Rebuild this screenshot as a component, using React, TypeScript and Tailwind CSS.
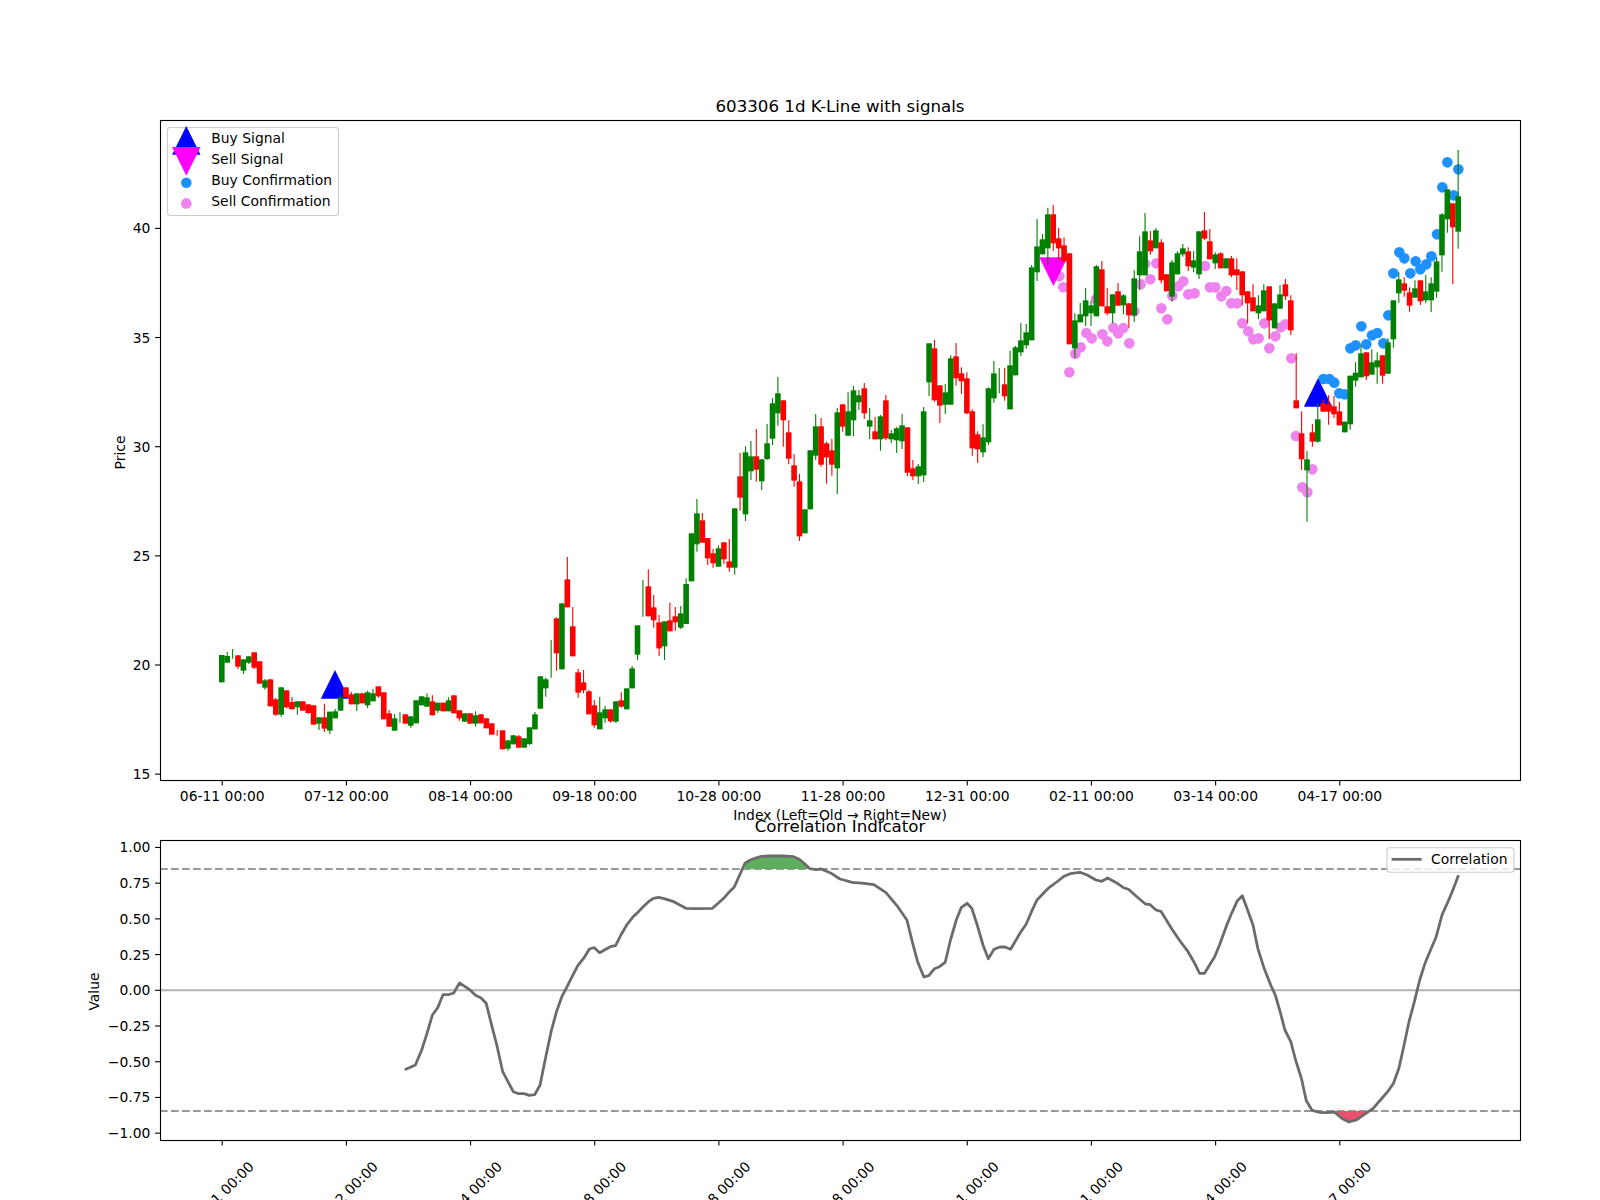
type Raw = [string, number, number, number?, number?];

const LABELS = ["06-11 00:00", "07-12 00:00", "08-14 00:00", "09-18 00:00", "10-28 00:00", "11-28 00:00", "12-31 00:00", "02-11 00:00", "03-14 00:00", "04-17 00:00"];

const xOf = (i: number) => 221.8 + 5.399 * i;
const priceY = (p: number) => 228.4 + (40 - p) * 21.83;
const corrY = (v: number) => 990.3 - 142.86 * v;

// candles read off the screenshot, grouped by crop (y offset, 3x scale)
const SEGMENTS: { oy: number; rows: Raw[] }[] = [
  {
    oy: 620,
    rows: [
      ["g", 105, 187], ["g", 108, 128, 96], ["g", 0, 0, 87, 116], ["r", 106, 140, 106, 147], ["g", 118, 152, 118, 162],
      ["g", 109, 128, 109, 132], ["r", 97, 143, 97, 147], ["r", 124, 191], ["g", 181, 203, 177, 209], ["r", 178, 259],
      ["r", 238, 284, 234, 288], ["g", 202, 284, 202, 290], ["r", 211, 262, 211, 265], ["r", 246, 268, 231], ["g", 244, 262, 244, 284],
      ["r", 244, 272], ["r", 253, 279, 253, 281], ["r", 256, 314], ["g", 292, 311, 292, 330], ["r", 292, 326, 251, 336],
      ["g", 275, 332, 275, 342], ["g", 274, 295, 267], ["g", 232, 272, 225], ["r", 202, 232], ["r", 223, 253, 216],
      ["g", 220, 253, 220, 273], ["r", 220, 250], ["g", 217, 256, 212, 264], ["g", 220, 244, 207], ["r", 199, 229, 199, 233],
      ["r", 217, 298], ["r", 280, 320, 270], ["g", 295, 332, 282], ["g", 0, 0, 277, 308], ["r", 283, 311],
      ["g", 289, 317, 289, 323], ["g", 241, 310], ["g", 229, 256], ["g", 232, 260, 220], ["r", 244, 286, 226],
      ["g", 248, 272, 248, 278], ["r", 248, 274], ["g", 241, 274, 232], ["r", 226, 280], ["r", 271, 295, 271, 302],
      ["g", 280, 305], ["r", 280, 311], ["g", 286, 311, 274, 320], ["r", 283, 310], ["r", 295, 325],
      ["r", 310, 344], ["r", 0, 0, 330, 347], ["r", 331, 388], ["g", 361, 386, 361, 392], ["g", 346, 373],
      ["r", 349, 383, 345], ["g", 355, 383], ["g", 322, 372, 322, 375], ["g", 283, 328, 276], ["g", 169, 266],
    ],
  },
  {
    oy: 540,
    rows: [
      ["g", 418, 445, 413, 470], ["g", 0, 0, 300, 413], ["r", 235, 340, 232, 392], ["g", 190, 388], ["r", 118, 202, 51],
      ["r", 259, 349, 201], ["r", 397, 458, 387, 473], ["r", 427, 451, 390, 460], ["r", 454, 523, 450], ["r", 496, 556, 480, 563],
      ["g", 517, 568, 471], ["g", 508, 535, 498, 548], ["r", 508, 544, 508, 548], ["g", 484, 545, 484, 548], ["r", 481, 500, 457, 503],
      ["g", 445, 508], ["g", 385, 445, 378], ["g", 256, 344, 256, 360], ["g", 0, 0, 120, 230], ["r", 139, 229, 88],
      ["r", 202, 241, 165, 263], ["r", 247, 325, 225, 348], ["g", 244, 319, 244, 360], ["r", 241, 274, 188], ["r", 229, 247, 201, 272],
      ["g", 220, 263, 198, 267],
    ],
  },
  {
    oy: 360,
    rows: [
      ["g", 672, 792, 655], ["g", 520, 664], ["g", 460, 553, 417, 575], ["r", 481, 548, 459], ["r", 534, 595, 534, 615],
      ["r", 580, 610, 567, 623], ["g", 565, 620, 556], ["r", 547, 598, 547, 612], ["r", 604, 623, 537, 635], ["g", 445, 623, 445, 644],
      ["r", 349, 413, 279, 452], ["g", 277, 463, 259, 483], ["g", 289, 334, 243, 360], ["r", 289, 329, 207, 365], ["g", 298, 364, 298, 390],
      ["g", 250, 297, 192, 300], ["g", 130, 236, 114, 255], ["g", 100, 160, 51, 197], ["r", 121, 181, 121, 260], ["r", 217, 296, 181, 312],
      ["r", 316, 362, 282, 380], ["r", 364, 529, 342, 543], ["g", 448, 520], ["g", 271, 448], ["g", 199, 287, 162, 300],
      ["r", 199, 314, 174, 320], ["r", 250, 292, 245, 371], ["r", 271, 314, 237, 347], ["g", 157, 325, 144, 402], ["r", 133, 200, 133, 215],
      ["g", 154, 227, 97, 228], ["g", 91, 181, 78, 228], ["g", 106, 127, 90, 150], ["r", 85, 160, 69, 177], ["g", 181, 200, 144, 237],
      ["r", 214, 238, 171], ["g", 169, 238, 165, 272], ["r", 121, 235, 105, 241], ["g", 220, 238, 210, 249], ["g", 205, 241, 201, 279],
      ["g", 196, 244, 162, 267], ["r", 202, 338, 202, 348], ["r", 325, 349, 300, 360], ["g", 319, 349, 312, 372], ["g", 154, 346, 141, 366],
    ],
  },
  {
    oy: 280,
    rows: [
      ["g", 190, 307, 190, 348], ["r", 205, 361, 180, 365], ["r", 316, 377, 316, 429], ["g", 337, 374, 312, 402], ["g", 235, 374, 226],
      ["r", 229, 295, 189, 317], ["r", 280, 304, 262, 342], ["r", 295, 400, 277, 403], ["r", 394, 505, 388, 527], ["r", 463, 508, 454, 548],
      ["g", 472, 517, 433, 531], ["g", 325, 487, 322, 495], ["g", 280, 355, 243, 368], ["g", 0, 0, 264, 340], ["r", 313, 349, 264, 362],
      ["g", 256, 388, 212], ["g", 202, 286, 198], ["g", 181, 217, 129, 228], ["g", 157, 196, 132, 206],
    ],
  },
  {
    oy: 190,
    rows: [
      ["g", 232, 451, 225], ["g", 169, 247, 87, 273], ["g", 148, 193, 132], ["g", 73, 175, 54, 225], ["r", 73, 160, 45, 183],
      ["r", 145, 175, 114, 211], ["r", 166, 214, 142], ["r", 190, 463], ["g", 391, 475, 370, 503], ["g", 373, 397, 339],
      ["g", 331, 379, 294, 408], ["g", 346, 370, 333, 408], ["g", 229, 379, 225], ["r", 238, 349, 213], ["r", 349, 370, 294, 376],
      ["g", 313, 370, 313, 400], ["r", 304, 347, 279], ["g", 316, 346, 313, 373], ["r", 340, 376, 340, 413], ["g", 265, 376, 241, 395],
      ["g", 184, 256, 139, 300], ["g", 124, 256, 69], ["r", 151, 184, 123, 194], ["g", 121, 175, 114], ["r", 157, 271, 148, 280],
      ["r", 253, 304], ["g", 217, 320, 210, 335], ["g", 190, 253, 184], ["g", 175, 193, 162, 200], ["r", 184, 229, 172, 243],
      ["g", 211, 233, 184, 247], ["g", 124, 253, 124, 267], ["r", 121, 146, 66, 150], ["r", 154, 208, 117], ["g", 193, 220, 187, 237],
      ["r", 190, 235, 187], ["g", 205, 235], ["r", 205, 256, 198, 262], ["r", 238, 256, 205, 300], ["r", 244, 316, 244, 346],
      ["r", 304, 340, 304, 400], ["r", 322, 364, 283], ["g", 346, 370, 316, 388], ["g", 301, 364, 283], ["r", 289, 391, 289, 447],
      ["g", 340, 415], ["g", 313, 356, 285], ["r", 283, 319, 267, 330], ["r", 331, 421, 316, 435],
    ],
  },
  {
    oy: 130,
    rows: [
      ["r", 811, 835, 670], ["r", 910, 988, 844, 1020], ["g", 988, 1021, 963, 1175], ["r", 907, 935, 882, 950], ["g", 868, 935, 820, 938],
      ["r", 820, 845, 810], ["r", 823, 845, 796, 884], ["r", 829, 853, 798, 864], ["r", 844, 886, 816], ["g", 875, 907],
      ["g", 737, 883, 737, 899], ["g", 728, 752, 697, 770], ["g", 670, 742, 646], ["r", 667, 739, 667, 750], ["g", 697, 734, 658],
      ["g", 691, 712, 667, 761], ["r", 676, 737, 676, 761], ["g", 637, 731, 625], ["g", 511, 628, 511, 653], ["g", 448, 490, 427, 518],
      ["r", 460, 482, 442, 500], ["r", 487, 527, 472, 545], ["g", 475, 503, 451], ["r", 451, 514, 451, 525], ["g", 484, 511, 435, 520],
      ["g", 460, 511, 442, 546], ["g", 394, 485, 382, 503], ["g", 253, 376, 250, 425], ["g", 178, 268, 178, 308], ["r", 220, 292, 220, 462],
      ["g", 199, 305, 60, 356],
    ],
  },
];

const CANDLES = SEGMENTS.flatMap((s) =>
  s.rows.map(([c, t, b, wt, wb]) => ({
    color: c === "g" ? "#008000" : "#ff0000",
    top: s.oy + t / 3,
    bottom: s.oy + b / 3,
    wickTop: s.oy + (wt ?? t) / 3,
    wickBottom: s.oy + (wb ?? b) / 3,
    hasBody: b > t,
  }))
);

const PINK_A: [number, number][] = [
  [178, 259], [190, 292], [288, 328], [259, 429], [275, 445], [307, 433], [322, 454], [340, 413], [355, 430], [370, 414],
  [388, 460], [242, 472], [226, 491], [208, 547], [403, 364], [422, 283], [435, 222], [451, 268], [469, 220], [484, 355],
  [502, 388], [517, 317], [535, 289], [550, 274], [565, 313], [584, 310], [615, 228], [630, 292], [646, 292], [664, 319],
  [679, 303], [694, 340], [712, 340], [727, 400], [745, 424], [760, 448], [776, 445], [793, 400], [808, 475], [826, 439],
  [842, 412], [856, 403], [874, 505],
];
const PINK_B: [number, number][] = [[288, 918], [337, 1018], [307, 1072], [322, 1087]];
const BLUE: [number, number][] = [
  [370, 747], [388, 747], [403, 758], [418, 790], [434, 793], [451, 655], [467, 646], [484, 589], [499, 643], [516, 616],
  [532, 609], [550, 640], [565, 556], [580, 430], [598, 367], [613, 385], [631, 430], [647, 394], [661, 418], [679, 403],
  [694, 379], [711, 313], [727, 172], [742, 97], [761, 196], [775, 118],
];

const LEFT_CURVE: [number, number][] = [
  [670, 869], [692, 855], [705, 810], [716, 760], [727, 705], [738, 683], [749, 644], [760, 644], [771, 639], [783, 609],
  [803, 628], [816, 646], [827, 653], [838, 670], [850, 740], [860, 795], [872, 875], [883, 905], [894, 935], [905, 941],
  [916, 941], [927, 946], [938, 944], [949, 916], [961, 830], [972, 755], [983, 695], [994, 650], [1005, 620], [1016, 588],
  [1027, 557], [1040, 533], [1051, 507], [1061, 503], [1072, 518], [1083, 509], [1094, 500], [1105, 497], [1116, 465], [1128, 435],
  [1140, 412], [1150, 398], [1162, 380], [1173, 365], [1183, 355], [1194, 352], [1205, 356], [1225, 365], [1250, 385], [1270, 386],
  [1305, 385], [1328, 355], [1340, 335], [1350, 321], [1361, 285], [1372, 250], [1383, 240], [1394, 234], [1406, 229], [1420, 228],
  [1450, 228], [1472, 230], [1484, 238], [1494, 250], [1506, 266], [1518, 269], [1529, 267], [1550, 280], [1568, 297],
];
const RIGHT_CURVE: [number, number][] = [
  [25, 307], [50, 310], [70, 314], [95, 338], [117, 376], [138, 420], [150, 490], [160, 545], [173, 591], [183, 587],
  [195, 566], [205, 560], [217, 547], [228, 480], [240, 420], [250, 383], [262, 370], [272, 385], [283, 435], [295, 495],
  [306, 536], [318, 508], [330, 501], [340, 501], [352, 508], [372, 458], [384, 433], [395, 395], [406, 361], [420, 339],
  [432, 322], [447, 306], [462, 289], [475, 281], [495, 277], [510, 285], [528, 300], [540, 304], [552, 294], [570, 308],
  [585, 323], [595, 328], [610, 347], [630, 372], [640, 374], [652, 390], [662, 394], [672, 417], [685, 448], [700, 480],
  [718, 515], [730, 545], [742, 580], [752, 580], [773, 530], [783, 495], [798, 435], [808, 400], [820, 362], [830, 347],
  [841, 390], [852, 435], [862, 505], [875, 565], [890, 620], [898, 645], [908, 695], [918, 750], [930, 785], [940, 840],
  [952, 895], [962, 962], [974, 991], [990, 997], [1005, 998], [1020, 996], [1035, 1015], [1050, 1026], [1065, 1020], [1085, 1000],
  [1100, 985], [1115, 960], [1130, 935], [1142, 910], [1153, 865], [1163, 800], [1174, 725], [1185, 665], [1196, 600], [1207, 550],
  [1220, 505], [1230, 470], [1242, 405], [1253, 370], [1263, 335], [1276, 286],
];

const SX = 1568 / 760;
const leftAbs = LEFT_CURVE.map(([x, y]) => [80 + x / SX, 780 + y / 3]);
const rightAbs = RIGHT_CURVE.map(([x, y]) => [840 + x / SX, 780 + y / 3]);
const CURVE = [...leftAbs, ...rightAbs];
const pts = (list: number[][]) => list.map(([x, y]) => `${x.toFixed(1)},${y.toFixed(1)}`).join(" ");

const upFill = leftAbs.filter(([x]) => x >= 80 + 1372 / SX && x <= 80 + 1506 / SX);
const downFill = rightAbs.filter(([x]) => x >= 840 + 1020 / SX && x <= 840 + 1088 / SX);

const Tri = ({ x, base, apex, fill }: { x: number; base: number; apex: number; fill: string }) => (
  <polygon points={`${x - 14.2},${base} ${x + 14.2},${base} ${x},${apex}`} fill={fill} />
);

const App = () => {
  return (
    <div className="flex h-[1200px] w-[1600px] flex-col gap-[60px] overflow-hidden bg-white pl-[160px] pt-[120px] font-['DejaVu_Sans',sans-serif] text-[13.89px] text-black">
      {/* K-line panel */}
      <svg viewBox="160 120 1360 660" className="block h-[660px] w-[1360px] shrink-0 overflow-visible">
        <text x={840} y={111.5} textAnchor="middle" fontSize={16.67}>603306 1d K-Line with signals</text>

        {PINK_A.map(([x, y], i) => (
          <circle key={i} cx={1000 + x / 3} cy={190 + y / 3} r={5.3} fill="#ee82ee" />
        ))}
        {PINK_B.map(([x, y], i) => (
          <circle key={i} cx={1200 + x / 3} cy={130 + y / 3} r={5.3} fill="#ee82ee" />
        ))}
        {BLUE.map(([x, y], i) => (
          <circle key={i} cx={1200 + x / 3} cy={130 + y / 3} r={5.3} fill="#1e90ff" />
        ))}
        <Tri x={335} base={698.7} apex={670} fill="#0000ff" />
        <Tri x={1318} base={406.7} apex={378.3} fill="#0000ff" />
        <Tri x={1053.4} base={257.3} apex={286} fill="#ff00ff" />

        {CANDLES.map((c, i) => (
          <g key={i}>
            <line x1={xOf(i)} x2={xOf(i)} y1={c.wickTop} y2={c.wickBottom} stroke={c.color} strokeWidth={1.1} />
            {c.hasBody && <rect x={xOf(i) - 2.8} y={c.top} width={5.6} height={c.bottom - c.top} fill={c.color} />}
          </g>
        ))}

        <rect x={160.5} y={120.5} width={1360} height={660} fill="none" stroke="#000" strokeWidth={1.11} />

        {[40, 35, 30, 25, 20, 15].map((p) => (
          <g key={p}>
            <line x1={155.1} x2={160} y1={priceY(p)} y2={priceY(p)} stroke="#000" strokeWidth={1.11} />
            <text x={150.3} y={priceY(p) + 5} textAnchor="end">{p}</text>
          </g>
        ))}
        {LABELS.map((label, i) => (
          <g key={label}>
            <line x1={xOf(i * 23) + 0.4} x2={xOf(i * 23) + 0.4} y1={780} y2={785.4} stroke="#000" strokeWidth={1.11} />
            <text x={xOf(i * 23) + 0.4} y={800.5} textAnchor="middle">{label}</text>
          </g>
        ))}
        <text x={840} y={819.5} textAnchor="middle">Index (Left=Old → Right=New)</text>
        <text transform="translate(124.5 452.5) rotate(-90)" textAnchor="middle">Price</text>

        {/* legend */}
        <rect x={167.5} y={127.5} width={171} height={88} rx={3} fill="#fff" fillOpacity={0.8} stroke="#cccccc" strokeWidth={1.11} />
        <Tri x={186.3} base={154.7} apex={126} fill="#0000ff" />
        <Tri x={186.3} base={147} apex={175.7} fill="#ff00ff" />
        <circle cx={186.3} cy={182.7} r={5.3} fill="#1e90ff" />
        <circle cx={186.3} cy={203.4} r={5.3} fill="#ee82ee" />
        <text x={211.3} y={143}>Buy Signal</text>
        <text x={211.3} y={164}>Sell Signal</text>
        <text x={211.3} y={185}>Buy Confirmation</text>
        <text x={211.3} y={206}>Sell Confirmation</text>
      </svg>

      {/* correlation panel */}
      <svg viewBox="160 840 1360 300" className="block h-[300px] w-[1360px] shrink-0 overflow-visible">
        <text x={840} y={831.5} textAnchor="middle" fontSize={16.67}>Correlation Indicator</text>

        <line x1={160} x2={1520} y1={990.3} y2={990.3} stroke="#b2b2b2" strokeWidth={2.08} />
        <line x1={160} x2={1520} y1={869} y2={869} stroke="#999999" strokeWidth={2.08} strokeDasharray="7.7 3.3" />
        <line x1={160} x2={1520} y1={1111} y2={1111} stroke="#999999" strokeWidth={2.08} strokeDasharray="7.7 3.3" />

        <polygon points={pts([[80 + 1372 / SX, 869], ...upFill, [80 + 1506 / SX, 869]])} fill="#5fae5f" />
        <polygon points={pts([[840 + 1020 / SX, 1111], ...downFill, [840 + 1088 / SX, 1111]])} fill="#e9516f" />
        <polyline points={pts(CURVE)} fill="none" stroke="#6b6b6b" strokeWidth={2.78} strokeLinejoin="round" />

        <rect x={160.5} y={840.5} width={1360} height={300} fill="none" stroke="#000" strokeWidth={1.11} />

        {[1, 0.75, 0.5, 0.25, 0, -0.25, -0.5, -0.75, -1].map((v) => (
          <g key={v}>
            <line x1={155.1} x2={160} y1={corrY(v)} y2={corrY(v)} stroke="#000" strokeWidth={1.11} />
            <text x={150.3} y={corrY(v) + 5} textAnchor="end">{(v < 0 ? "−" : "") + Math.abs(v).toFixed(2)}</text>
          </g>
        ))}
        {LABELS.map((label, i) => (
          <g key={label}>
            <line x1={xOf(i * 23) + 0.4} x2={xOf(i * 23) + 0.4} y1={1140} y2={1145.4} stroke="#000" strokeWidth={1.11} />
            <text transform={`translate(${xOf(i * 23) - 0.6} 1194) rotate(-45)`} y={5} textAnchor="middle">{label}</text>
          </g>
        ))}
        <text transform="translate(99 991.5) rotate(-90)" textAnchor="middle">Value</text>

        {/* legend */}
        <rect x={1387} y={847.7} width={127} height={24.6} rx={3} fill="#fff" fillOpacity={0.8} stroke="#cccccc" strokeWidth={1.11} />
        <line x1={1391.6} x2={1421.7} y1={859.3} y2={859.3} stroke="#6b6b6b" strokeWidth={2.78} />
        <text x={1431} y={864.3}>Correlation</text>
      </svg>
    </div>
  );
};

export default App;
